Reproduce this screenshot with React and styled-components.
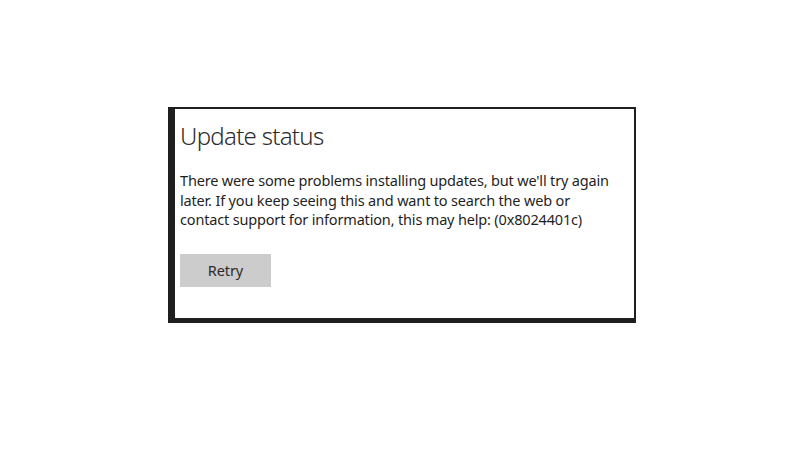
import React from "react";
import styled, { createGlobalStyle } from "styled-components";

const Global = createGlobalStyle`
  html, body { margin: 0; padding: 0; background: #ffffff; }
  body { font-family: "Noto Sans", "Open Sans", sans-serif; }
`;

const Page = styled.div`
  width: 800px;
  height: 450px;
  box-sizing: border-box;
  padding: 107px 0 0 168px;
  background: #ffffff;
`;

const Panel = styled.div`
  width: 468px;
  height: 216px;
  box-sizing: border-box;
  border-style: solid;
  border-color: #1f1f1f;
  border-width: 2px 2px 5px 7px;
  background: #ffffff;
  padding: 12px 12px 0 5px;
  display: flex;
  flex-direction: column;
  align-items: flex-start;
`;

const Title = styled.h1`
  margin: 0;
  font-family: "Noto Sans", sans-serif;
  font-weight: 300;
  font-size: 24px;
  letter-spacing: -0.7px;
  line-height: 30px;
  color: #2b2b2b;
`;

const Message = styled.p`
  margin: 20px 0 0 0;
  font-family: "Noto Sans", sans-serif;
  font-size: 14.5px;
  letter-spacing: -0.17px;
  line-height: 19.5px;
  color: #1f1f1f;
`;

const Button = styled.button`
  margin-top: 24px;
  width: 91px;
  height: 33px;
  border: none;
  background: #cccccc;
  font-family: "Noto Sans", sans-serif;
  font-size: 14.5px;
  letter-spacing: -0.1px;
  color: #2b2b2b;
  padding: 0;
`;

export default function App() {
  return (
    <>
      <Global />
      <Page>
        <Panel>
          <Title>Update status</Title>
          <Message>
            There were some problems installing updates, but we'll try again
            later. If you keep seeing this and want to search the web or
            contact support for information, this may help: (0x8024401c)
          </Message>
          <Button>Retry</Button>
        </Panel>
      </Page>
    </>
  );
}
